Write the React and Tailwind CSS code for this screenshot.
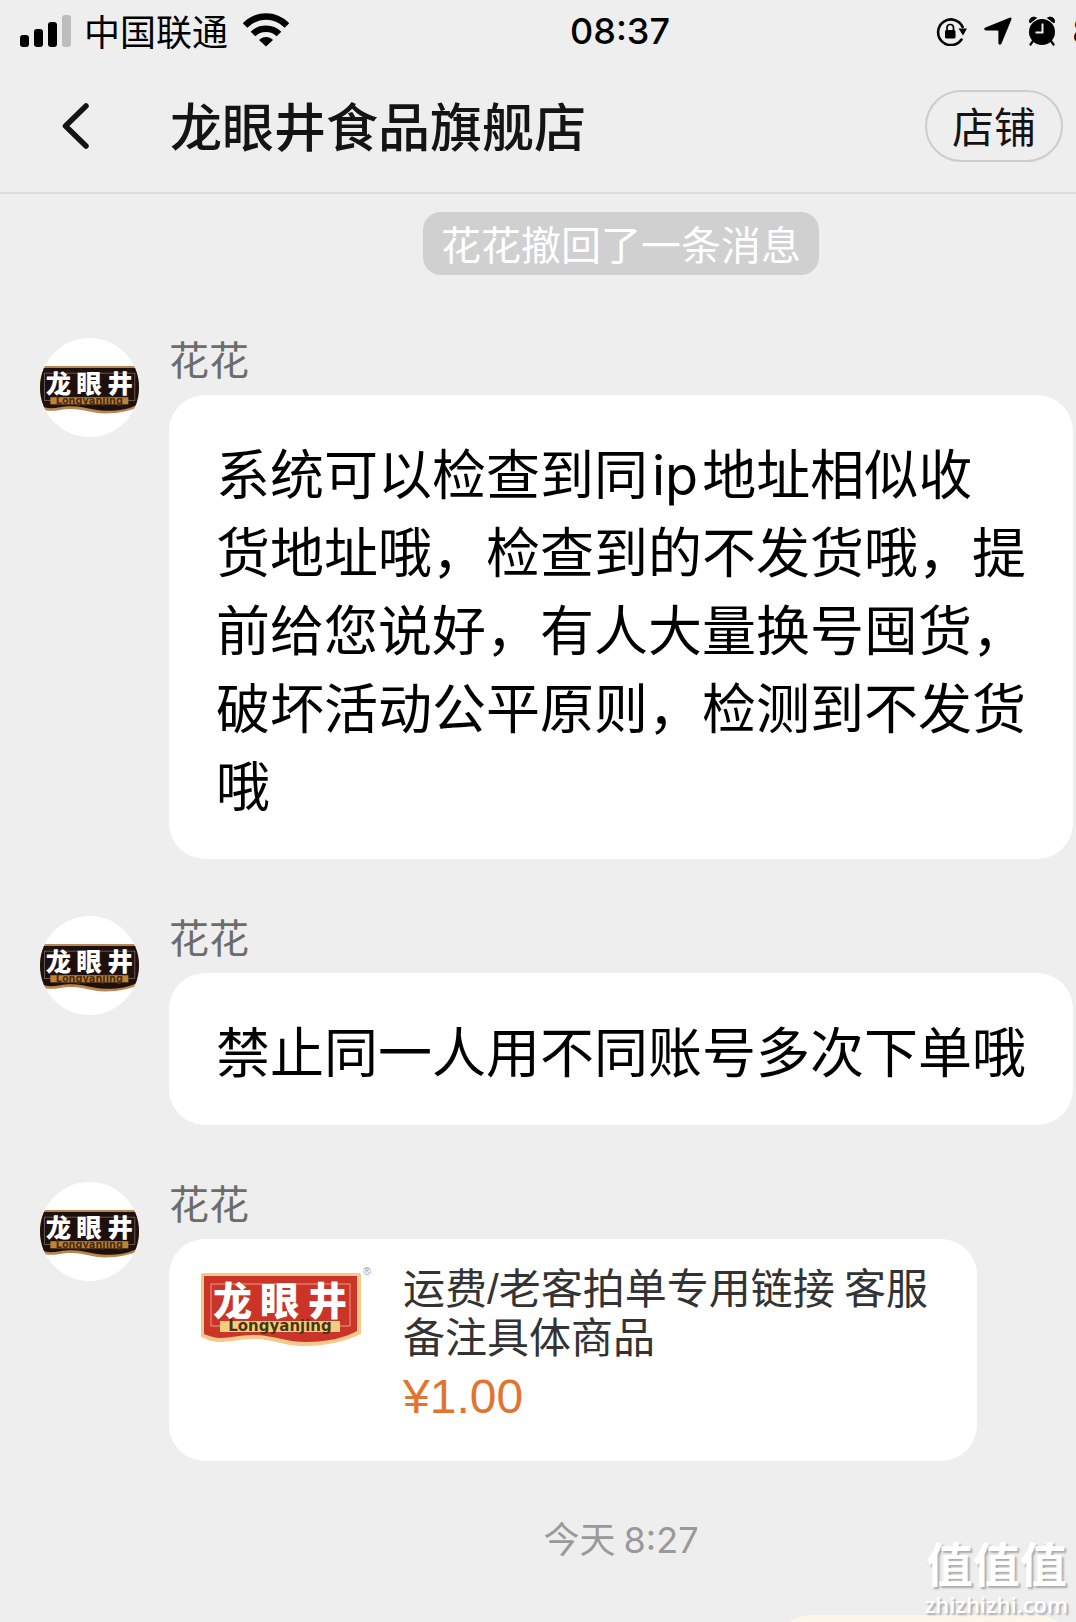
import React from "react";

const BRAND = {
  dark: { panel: "#1e100f", edge: "#b98850", line: "#8c7a70", band: "#bd8433", label: "#4a2a10" },
  red: { panel: "#cb3428", edge: "#f6c98b", line: "#ee9a7c", band: "#f3cf7c", label: "#4a3510" },
};

function Logo({ tone, className }) {
  const c = BRAND[tone];
  return (
    <svg viewBox="0 0 160 74" className={className} role="img" aria-label="龙眼井">
      <path d="M1 0H158Q160 0 160 2V61C147 67 128 73 104 73C82 73 72 66 52 66C38 66 30 69 20 69C12 69 6 67 0 64V1Z" fill={c.edge} />
      <path d="M3 3H156V58C143 65 126 69 105 69C84 69 72 62 52 62C38 62 30 65 20 65C14 65 8 63 3 61Z" fill={c.panel} />
      <rect x="10" y="11" width="139" height="42" fill="none" stroke={c.line} strokeWidth="1" />
      <g fill="#fff" fontFamily="'Noto Sans CJK SC', sans-serif" fontSize="39" fontWeight="900">
        <text x="12" y="42">龙</text>
        <text x="59" y="42">眼</text>
        <text x="107" y="42">井</text>
      </g>
      <rect x="19" y="48" width="120" height="11" fill={c.band} />
      <text x="79" y="58" textAnchor="middle" fill={c.label} fontFamily="'DejaVu Sans', sans-serif" fontSize="15" fontWeight="700">
        Longyanjing
      </text>
    </svg>
  );
}

function Avatar() {
  return (
    <div className="flex h-[99px] w-[99px] shrink-0 items-center justify-center overflow-hidden rounded-full bg-white">
      <Logo tone="dark" className="mt-[6px] w-[104px] shrink-0" />
    </div>
  );
}

function Message({ children }) {
  return (
    <article className="flex items-start gap-[30px]">
      <Avatar />
      <div className="min-w-0 flex-1">
        <div className="mb-[17px] text-[40px] leading-[40px] text-[#6c6c6c]">花花</div>
        {children}
      </div>
    </article>
  );
}

function Bubble({ children }) {
  return (
    <p className="w-fit rounded-[36px] bg-white px-[47px] pt-[38px] pb-[36px] text-[54px] leading-[78px] text-black">{children}</p>
  );
}

function StatusBar() {
  return (
    <div className="grid h-[62px] grid-cols-[570px_1fr_auto] items-center overflow-hidden text-black">
      <div className="flex items-center pl-5">
        <svg viewBox="0 0 52 33" className="h-[33px] w-[52px]" aria-label="信号">
          <rect x="0" y="20" width="9" height="12" rx="3" />
          <rect x="14" y="14" width="9" height="18" rx="3" />
          <rect x="28" y="7" width="9" height="25" rx="3" />
          <rect x="42" y="0" width="9" height="32" rx="3" fill="#bdbdbd" />
        </svg>
        <span className="ml-3 pb-[3px] text-[36px] leading-none">中国联通</span>
        <svg viewBox="0 0 46 34" className="mb-[3px] ml-[15px] h-[34px] w-[46px]" aria-label="Wi-Fi">
          <path d="M2 12.500C14 .5 32 .5 44 12.500" fill="none" stroke="#000" strokeWidth="6.500" />
          <path d="M10 21C17 14 29 14 36 21" fill="none" stroke="#000" strokeWidth="6.500" />
          <path d="M16 27C20 23 26 23 30 27L23 33.500Z" />
        </svg>
      </div>
      <time className="font-['Inter',sans-serif] text-[36px] leading-none font-medium">08:37</time>
      <div className="flex items-center">
        <svg viewBox="0 0 32 30" className="h-[30px] w-8" aria-label="方向锁定">
          <path d="M25.500 23.500A12.800 12.800 0 1 1 26.600 11" fill="none" stroke="#000" strokeWidth="2.600" strokeLinecap="round" />
          <path d="M22.500 12.500H31L27 19.500Z" />
          <rect x="9" y="14" width="10.500" height="8.500" rx="1.500" />
          <path d="M11 15V11.500Q11 8.500 14.200 8.500T17.500 11.500V15" fill="none" stroke="#000" strokeWidth="1.700" />
        </svg>
        <svg viewBox="0 0 28 28" className="ml-4 h-7 w-7" aria-label="定位">
          <path d="M25.500.7Q28.200 0 27.300 2.700L17.500 26.500C16.800 28.300 14.500 28 14.400 26V14.500Q14.400 13.400 13.300 13.400H1.800C0 13.300-.4 11.300 1.500 10.500Z" />
        </svg>
        <svg viewBox="0 0 28 30" className="ml-4 h-[30px] w-7" aria-label="闹钟">
          <circle cx="14" cy="16" r="13" />
          <path d="M2 7Q.5 4 3 2Q6 0 8.500 2ZM26 7Q27.500 4 25 2Q22 0 19.500 2Z" stroke="#000" />
          <path d="M5 25L2.500 28.500M23 25L25.500 28.500" stroke="#000" strokeWidth="2.200" strokeLinecap="round" />
          <path d="M14.500 7.500V16.500H7.500" fill="none" stroke="#eee" strokeWidth="2" />
        </svg>
        <span className="ml-4 w-1 overflow-hidden font-['Inter',sans-serif] text-[36px] leading-none">8</span>
      </div>
    </div>
  );
}

export default function App() {
  return (
    <div className="relative flex min-h-screen flex-col overflow-hidden bg-[#eeeeee] font-['Noto_Sans_CJK_SC',sans-serif]" lang="zh-CN">
      <header className="border-b-2 border-[#dcdcdc]">
        <StatusBar />
        <div className="flex h-[130px] items-center pr-[13px] pb-[2px] pl-[62px]">
          <button type="button" aria-label="返回" className="w-[108px]">
            <svg viewBox="0 0 28 46" className="h-[46px] w-7">
              <path d="M24 3L3.500 23L24 43" fill="none" stroke="#141414" strokeWidth="5.500" strokeLinecap="round" strokeLinejoin="round" />
            </svg>
          </button>
          <h1 className="flex-1 pb-[2px] text-[52px] leading-none font-medium text-[#141414]">龙眼井食品旗舰店</h1>
          <button type="button" className="h-[72px] rounded-full border-2 border-[#cccccc] px-[25px] pb-[3px] text-[42px] leading-none text-[#141414]">
            店铺
          </button>
        </div>
      </header>

      <main className="flex flex-1 flex-col pt-[18px] pr-[3px] pl-10">
        <div className="flex justify-center pl-[129px]">
          <span className="rounded-[18px] bg-[#d0d0d0] px-[18px] pb-px text-[40px] leading-[62px] text-white">花花撤回了一条消息</span>
        </div>

        <section className="mt-[63px] flex flex-col gap-[57px]">
          <Message>
            <Bubble>
              系统可以检查到同<span className="mx-1 font-['Inter',sans-serif] leading-none">ip</span>地址相似收
              <br />
              货地址哦，检查到的不发货哦，提前给您说好，有人大量换号囤货，破坏活动公平原则，检测到不发货哦
            </Bubble>
          </Message>
          <Message>
            <Bubble>禁止同一人用不同账号多次下单哦</Bubble>
          </Message>
          <Message>
            <a href="#product" className="flex h-[222px] w-[808px] max-w-full items-start rounded-[36px] bg-white pt-[23px] pr-10 pl-8">
              <Logo tone="red" className="mt-[11px] w-40 shrink-0" />
              <span className="w-[42px] shrink-0 pt-1 pl-[2px] font-['Liberation_Sans',sans-serif] text-[11px] leading-none text-[#999999]">®</span>
              <span className="min-w-0 flex-1">
                <span className="block text-[42px] leading-[48px] text-[#333333]">
                  运费<span className="font-['Liberation_Sans',sans-serif] leading-none">/</span>老客拍单专用链接 客服备注具体商品
                </span>
                <span className="mt-[11px] block font-['Liberation_Sans',sans-serif] text-[48px] leading-[54px] text-[#e2742f]">¥1.00</span>
              </span>
            </a>
          </Message>
        </section>

        <div className="mt-[55px] pl-[129px] text-center text-[36px] leading-[42px] text-[#999999]">
          今天 <span className="font-['Inter',sans-serif]">8:27</span>
        </div>

        <div className="mt-auto h-[7px] overflow-hidden">
          <div className="ml-auto h-[152px] w-[298px] rounded-[36px] bg-[#fcf6e8]" />
        </div>
      </main>

      <div className="absolute right-2 bottom-1 flex flex-col items-center text-white [text-shadow:2px_2px_2px_#aaaaaa]">
        <span className="text-[47px] leading-[56px] font-bold">值值值</span>
        <span className="font-['Open_Sans',sans-serif] text-[22px] leading-[28px] font-semibold">zhizhizhi.com</span>
      </div>
    </div>
  );
}
